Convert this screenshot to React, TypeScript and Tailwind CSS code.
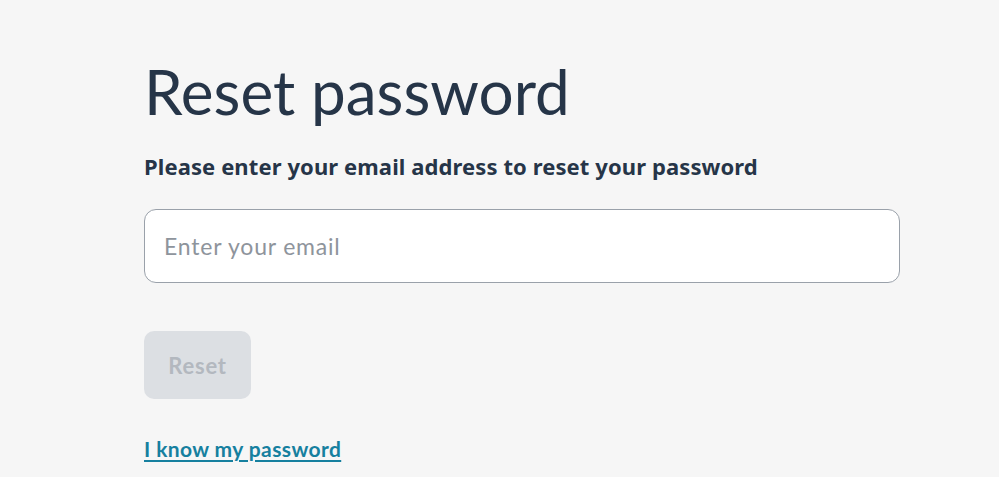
import React from 'react';

const font = { fontFamily: 'Lato, "Noto Sans", sans-serif' };

export default function App() {
  return (
    <div className="min-h-[477px] w-full bg-[#f6f6f6] text-[#263548]" style={font}>
      <div className="ml-[144px] w-[756px] pt-[53px]">
        <h1 className="text-[62px] leading-[76px] font-normal tracking-[0px]">Reset password</h1>
        <p className="mt-[23px] text-[22px] leading-[28px] font-bold tracking-[0.1px]" style={{ fontFamily: '"Noto Sans", Lato, sans-serif' }}>
          Please enter your email address to reset your password
        </p>
        <input
          type="email"
          placeholder="Enter your email"
          className="mt-[29px] block h-[74px] w-full rounded-[12px] border border-[#9aa1aa] bg-white px-[19px] text-[23px] tracking-[0.8px] text-[#263548] placeholder:text-[#8e949c] outline-none"
        />
        <button
          disabled
          className="mt-[48px] block h-[68px] w-[107px] rounded-[10px] bg-[#dcdfe3] text-[22px] tracking-[0.8px] font-bold text-[#b3b8bf]"
        >
          Reset
        </button>
        <a href="#" className="mt-[36px] inline-block text-[21px] tracking-[0.4px] font-bold leading-[28px] text-[#16809f] underline underline-offset-[3px]">
          I know my password
        </a>
      </div>
    </div>
  );
}
